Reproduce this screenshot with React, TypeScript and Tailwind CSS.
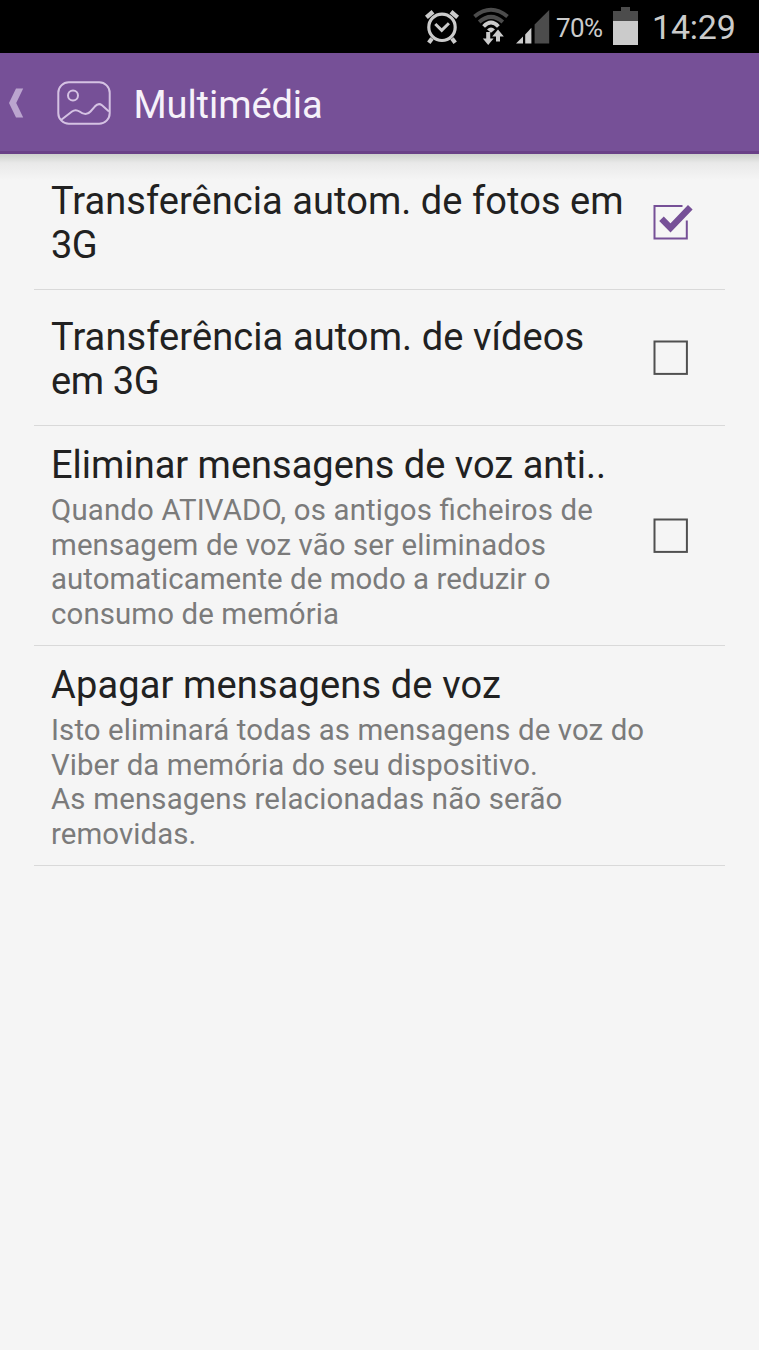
import type { ReactNode } from "react";

function AlarmIcon() {
  return (
    <svg className="h-9 w-9 shrink-0" viewBox="0 0 36 36" fill="none" stroke="#cbcbcb">
      <circle cx="18" cy="19.3" r="13.2" strokeWidth="3.2" />
      <path d="M11.3 16l6.4 6.4 7.2-7.2" strokeWidth="3" />
      <path d="M2.4 9.4l6.6-5.6M33.6 9.4l-6.6-5.6" strokeWidth="4.4" />
      <path d="M8 30.5l-3.2 4.2M28 30.5l3.2 4.2" strokeWidth="4.2" />
    </svg>
  );
}

function WifiIcon() {
  return (
    <svg className="h-10 w-9 shrink-0" viewBox="0 0 36 40" fill="none">
      <path d="M1.5 9.5Q18 -4 34.5 9.5" stroke="#4c4c4c" strokeWidth="4" />
      <path d="M6.2 15Q18 4.8 29.8 15" stroke="#4c4c4c" strokeWidth="4" />
      <path d="M10.6 19.5Q18 11.5 25.4 19.5" stroke="#cbcbcb" strokeWidth="3.8" />
      <path d="M14 22.4Q18 18.4 22 22.4L18 25.8z" fill="#cbcbcb" />
      <path d="M13.2 25h4v6.5h3.4l-5.4 6.6-5.4-6.6h3.4z" fill="#cbcbcb" />
      <path d="M23 34.4h4v-4.8h3.8l-5.8-7-5.8 7H23z" fill="#cbcbcb" />
    </svg>
  );
}

function SignalIcon() {
  return (
    <svg className="h-9 w-[35px] shrink-0" viewBox="0 0 35 36">
      <path d="M0 33.6L7 26.4V33.6z" fill="#cbcbcb" />
      <path d="M9.2 24.5L15.4 17.8V33.6H9.2z" fill="#cbcbcb" />
      <path d="M18.6 14.6L33.2 0V33.6H18.6z" fill="#4c4c4c" />
    </svg>
  );
}

function BatteryIcon() {
  return (
    <svg className="h-[38px] w-[25px] shrink-0" viewBox="0 0 25 38">
      <path d="M8 0h9v4h8v10H0V4h8z" fill="#4c4c4c" />
      <path d="M0 14h25v24H0z" fill="#cbcbcb" />
    </svg>
  );
}

function StatusBar() {
  return (
    <div className="flex h-[53px] items-start bg-black text-[#cbcbcb]">
      <div className="ml-[424px] mt-[8px]"><AlarmIcon /></div>
      <div className="ml-[13px] mt-[7px]"><WifiIcon /></div>
      <div className="ml-[7px] mt-[10px]"><SignalIcon /></div>
      <span className="ml-[5px] mt-[12px] w-[57px] whitespace-nowrap text-[26px] leading-[32px] tracking-[-0.6px]">70%</span>
      <div className="mt-[7px]"><BatteryIcon /></div>
      <span className="ml-[14px] mt-[7px] whitespace-nowrap text-[34px] leading-[40px] tracking-[-0.2px]">14:29</span>
    </div>
  );
}

function Header() {
  return (
    <header className="flex h-[101px] items-center border-b-[3px] border-[#694087] bg-[#765097] pt-[2px]">
      <svg className="ml-[9px] h-[30px] w-[15px]" viewBox="0 0 15 30">
        <path d="M7 0.5h7.2L7.2 15l7 14.5H7L0 15z" fill="#bba5cf" />
      </svg>
      <svg className="ml-[33px] h-[44px] w-[54px]" viewBox="0 0 54 44" fill="none" stroke="#d5c2e3" strokeWidth="2">
        <rect x="1.3" y="1.3" width="51.4" height="41.4" rx="10.5" />
        <circle cx="16" cy="14.4" r="5" />
        <path d="M4 39L15 30.5Q18.5 27.8 22.5 30.5Q29 35.6 33.5 30.5L38 25.3Q41.5 21.5 45 24.3L52 30.5" />
      </svg>
      <h1 className="ml-[22.5px] mt-[3px] whitespace-nowrap text-[38px] leading-[44px] tracking-[-0.08px] text-[#f6f2fa]">Multimédia</h1>
    </header>
  );
}

function Checkbox({ checked }: { checked: boolean }) {
  return (
    <svg className="h-10 w-10 shrink-0" viewBox="0.5 1.5 40 40" fill="none" role="checkbox" aria-checked={checked}>
      {checked ? (
        <>
          <path d="M30 5.5H2V38H34.3V20" stroke="#765097" strokeWidth="2" />
          <path d="M9 18.2L18 27.4 37.8 6.7" stroke="#765097" strokeWidth="6.4" />
        </>
      ) : (
        <rect x="2" y="5" width="32.4" height="32.4" stroke="#505050" strokeWidth="2" />
      )}
    </svg>
  );
}

function Row({ className, children, checked }: { className: string; children: ReactNode; checked?: boolean }) {
  return (
    <li className="flex justify-between border-b border-[#d9d9d9] pl-[17px]">
      <div className={"whitespace-nowrap " + className}>{children}</div>
      {checked !== undefined && (
        <div className="mr-[32px] flex items-center self-stretch">
          <Checkbox checked={checked} />
        </div>
      )}
    </li>
  );
}

function Line({ className = "", children }: { className?: string; children: ReactNode }) {
  return <span className={"block " + className}>{children}</span>;
}

const title = "text-[38px] leading-[44px] text-[#212121]";
const summary = "text-[29.4px] leading-[34.5px] text-[#7b7b7b] [font-feature-settings:'liga']";

export default function App() {
  return (
    <main className="h-[1350px] w-[759px] overflow-hidden bg-[#f5f5f5] font-[Roboto,sans-serif]">
      <StatusBar />
      <Header />
      <div className="-mb-[26px] h-[26px] bg-linear-to-b from-[#cdd0cc] via-[#e9e9e9] via-35% to-[#f5f5f5]" />
      <ul className="relative mx-[34px]">
        <Row className="h-[135px] pt-[25px]" checked={true}>
          <h2 className={title}>
            <Line className="tracking-[0.06px]">Transferência autom. de fotos em</Line>
            <Line className="tracking-[-0.6px]">3G</Line>
          </h2>
        </Row>
        <Row className="h-[135px] pt-[25px]" checked={false}>
          <h2 className={title}>
            <Line className="tracking-[0.1px]">Transferência autom. de vídeos</Line>
            <Line className="tracking-[-0.4px]">em 3G</Line>
          </h2>
        </Row>
        <Row className="h-[219px] pt-[17px]" checked={false}>
          <h2 className={title}>Eliminar mensagens de voz anti..</h2>
          <p className={"mt-[6px] " + summary}>
            <Line className="tracking-[0.17px]">Quando ATIVADO, os antigos ficheiros de</Line>
            <Line className="tracking-[0.11px]">mensagem de voz vão ser eliminados</Line>
            <Line className="tracking-[0.05px]">automaticamente de modo a reduzir o</Line>
            <Line className="tracking-[0.12px]">consumo de memória</Line>
          </p>
        </Row>
        <Row className="h-[219px] pt-[17px]">
          <h2 className={title + " tracking-[0.14px]"}>Apagar mensagens de voz</h2>
          <p className={"mt-[6px] " + summary}>
            <Line className="tracking-[0.11px]">Isto eliminará todas as mensagens de voz do</Line>
            <Line className="tracking-[0.08px]">Viber da memória do seu dispositivo.</Line>
            <Line className="tracking-[0.18px]">As mensagens relacionadas não serão</Line>
            <Line className="tracking-[0.1px]">removidas.</Line>
          </p>
        </Row>
      </ul>
    </main>
  );
}
